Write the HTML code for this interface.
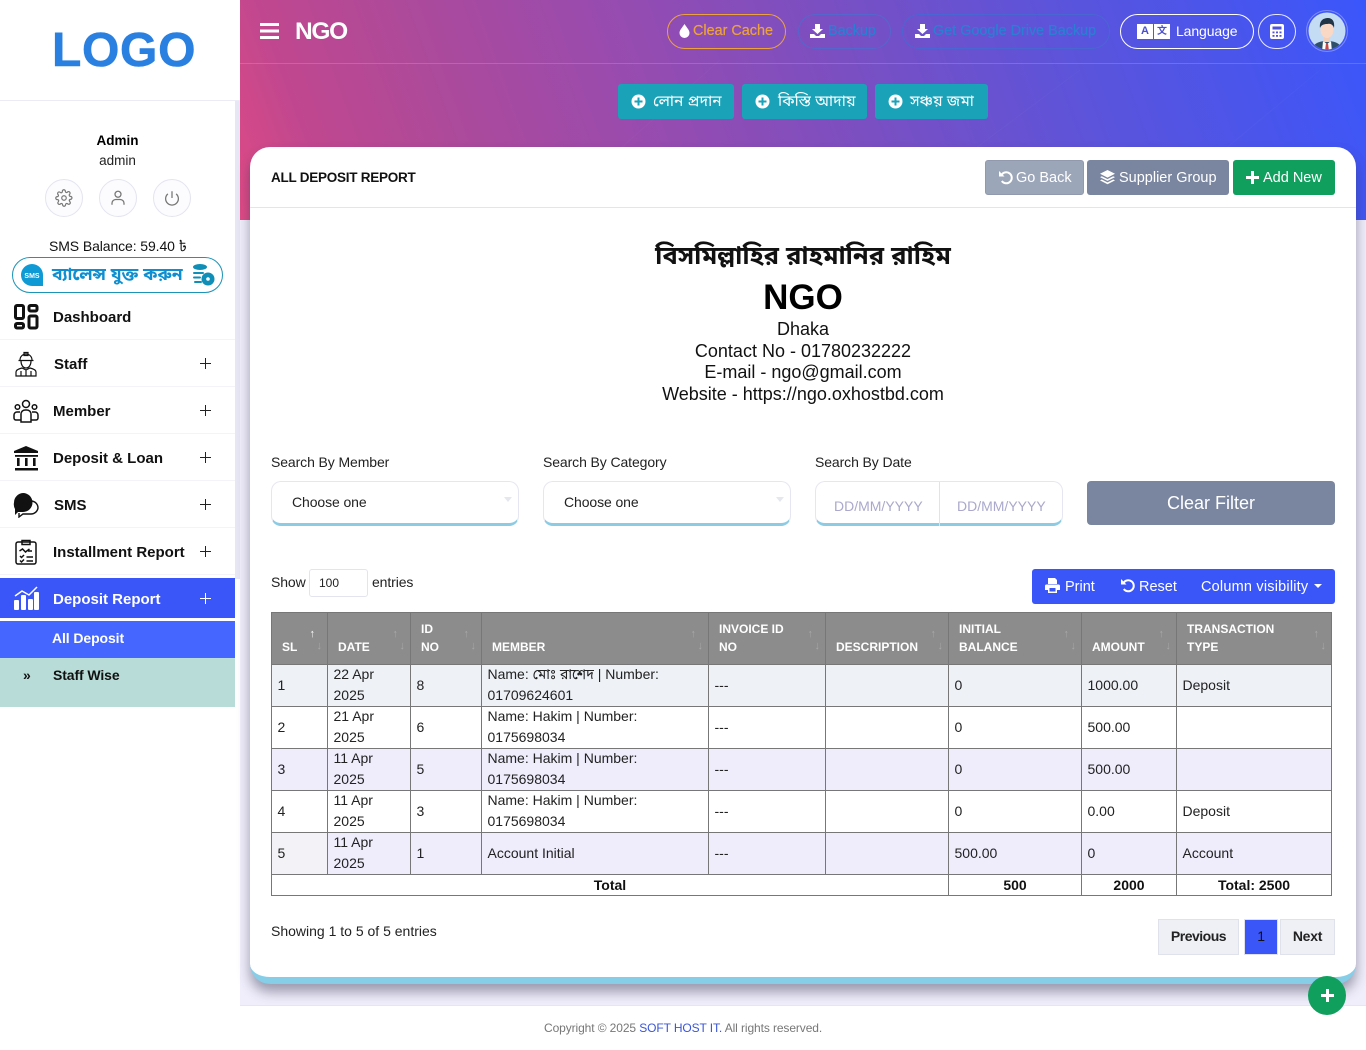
<!DOCTYPE html>
<html lang="en"><head><meta charset="utf-8"><title>All Deposit Report</title>
<style>
*{box-sizing:border-box}
html,body{margin:0;padding:0}
body{width:1366px;height:1050px;position:relative;overflow:hidden;background:#f0eefb;font-family:"Liberation Sans","Noto Sans Bengali","Noto Sans CJK SC",sans-serif;color:#111;font-size:14px}
.a{position:absolute;white-space:nowrap}
.side{position:absolute;left:0;top:0;width:240px;height:1050px;background:#fff}
.menu{position:absolute;left:0;width:235px;height:47px;border-bottom:1px solid #f3f3f8}
.menu b{position:absolute;left:53px;top:16px;font-size:15px;line-height:18px;color:#111}
.menu i{position:absolute;left:200px;top:18px;width:11px;height:11px;background:linear-gradient(#222,#222) center/11px 1.4px no-repeat,linear-gradient(#222,#222) center/1.4px 11px no-repeat}
.menu svg{position:absolute;left:13px;top:11px}
.hero{position:absolute;left:240px;top:0;width:1126px;height:220px;background:linear-gradient(70deg,#df4a85 0%,#c0478f 8%,#ad4a9a 20%,#9a4bad 35%,#7a4fc2 55%,#5a54dc 75%,#3a56fb 100%)}
.pill{position:absolute;top:14px;height:35px;border-radius:18px;border:1px solid;font-size:14.4px;line-height:33px;white-space:nowrap}
.pill span.t{position:absolute;top:0}
.pill svg.ic{position:absolute;top:9px}
.teal{position:absolute;top:84px;height:35px;background:#19a2b8;border-radius:3px;color:#fff;font-size:15.5px;line-height:35px;white-space:nowrap}
.teal svg{position:absolute;left:13px;top:10px}
.teal span{position:absolute;top:0}
.card{position:absolute;left:250px;top:147px;width:1106px;height:837px;background:#fff;border-radius:20px;border-bottom:7px solid #86cde8;box-shadow:0 8px 12px rgba(50,50,80,.45)}
.btn{position:absolute;top:160px;height:35px;border-radius:3px;color:#fff;font-size:14.5px;line-height:36px;white-space:nowrap}
.inp{position:absolute;top:481px;height:45px;background:#fff;border:1px solid #e6e6f2;border-bottom:3px solid #8ccbe3;border-radius:10px}
.lbl{position:absolute;top:454px;font-size:14px;line-height:17px;white-space:nowrap;color:#222;letter-spacing:-.1px}
table{position:absolute;left:271px;top:612px;width:1060px;border-collapse:collapse;table-layout:fixed;font-size:14px}
td,th{border:1px solid #777;padding:0 5.5px;line-height:21px;height:42px;vertical-align:middle;color:#222;overflow:hidden}
td>div{position:relative;top:-1px;margin-bottom:-1px}
th{background:#8c8c8c;color:#fff;font-size:12px;height:52px;vertical-align:bottom;text-align:left;padding:0 10px 8px 10px;line-height:18px;position:relative}
th::after{content:"↑";position:absolute;right:12px;top:15px;font-size:11px;line-height:12px;color:#a8a8a8;font-weight:400}
th::before{content:"↓";position:absolute;right:5px;top:27px;font-size:11px;line-height:12px;color:#a8a8a8;font-weight:400}
th.sl::after{color:#fff}
.r1 td{background:#eef1f6}.r3 td{background:#efedfc}.r5 td{background:#efedfc}
.r5 td:first-child{background:#f3f3f7}
.tot td{height:21px;font-weight:700;text-align:center;line-height:18px;padding-bottom:1px;background:#fff;color:#111}
.pg{position:absolute;top:919px;height:36px;background:#eef0f5;border:1px solid #dfe2ea;font-size:14px;font-weight:700;line-height:33px;text-align:center;color:#222;letter-spacing:-.25px}
</style></head><body>

<div class="hero">
 <svg style="position:absolute;left:0;top:0" width="1126" height="220"><g stroke="#fff" fill="none"><path d="M0 63.5H1126" stroke-opacity=".16"/><path d="M300 220L480 60M640 220L840 70M900 220L1080 70" stroke-opacity=".025"/></g></svg>
</div>

<div class="side">
 <div class="a" style="left:52px;top:20px;font-size:48px;line-height:62px;font-weight:700;color:#2a80e0;letter-spacing:.7px;-webkit-text-stroke:.6px #2a80e0">LOGO</div>
 <div style="position:absolute;left:0;top:100px;width:240px;height:1px;background:#ecebf5"></div>
 <div style="position:absolute;left:235px;top:101px;width:5px;height:478px;background:#e6e6f4"></div>
 <div class="a" style="left:0;width:235px;top:132px;text-align:center;font-size:13.5px;line-height:17px;font-weight:700;color:#000">Admin</div>
 <div class="a" style="left:0;width:235px;top:152px;text-align:center;font-size:13.5px;line-height:17px;color:#222">admin</div>
 <div style="position:absolute;left:45px;top:179px;width:38px;height:38px;border:1px solid #e4e4f0;border-radius:50%;background:#fcfcfe"></div>
 <div style="position:absolute;left:99px;top:179px;width:38px;height:38px;border:1px solid #e4e4f0;border-radius:50%;background:#fcfcfe"></div>
 <div style="position:absolute;left:153px;top:179px;width:38px;height:38px;border:1px solid #e4e4f0;border-radius:50%;background:#fcfcfe"></div>
 <svg style="position:absolute;left:55px;top:189px" width="18" height="18" viewBox="0 0 24 24" fill="none" stroke="#777" stroke-width="1.6"><circle cx="12" cy="12" r="3"/><path d="M19.4 15a1.6 1.6 0 0 0 .3 1.8l.1.1a2 2 0 1 1-2.9 2.9l-.1-.1a1.6 1.6 0 0 0-2.7 1.1V21a2 2 0 1 1-4 0v-.1a1.6 1.6 0 0 0-2.7-1.1l-.1.1a2 2 0 1 1-2.9-2.9l.1-.1a1.6 1.6 0 0 0-1.1-2.7H3a2 2 0 1 1 0-4h.1a1.6 1.6 0 0 0 1.1-2.7l-.1-.1a2 2 0 1 1 2.9-2.9l.1.1a1.6 1.6 0 0 0 2.7-1.1V3a2 2 0 1 1 4 0v.1a1.6 1.6 0 0 0 2.7 1.1l.1-.1a2 2 0 1 1 2.9 2.9l-.1.1a1.6 1.6 0 0 0 1.1 2.7h.1a2 2 0 1 1 0 4h-.1a1.6 1.6 0 0 0-1.5 1z"/></svg>
 <svg style="position:absolute;left:109px;top:189px" width="18" height="18" viewBox="0 0 24 24" fill="none" stroke="#777" stroke-width="1.7"><circle cx="12" cy="7" r="4"/><path d="M4 21v-2a5 5 0 0 1 5-5h6a5 5 0 0 1 5 5v2"/></svg>
 <svg style="position:absolute;left:163px;top:189px" width="18" height="18" viewBox="0 0 24 24" fill="none" stroke="#777" stroke-width="1.7"><path d="M12 3v9M17.5 6.5a8.5 8.5 0 1 1-11 0"/></svg>
 <div class="a" style="left:49px;top:238px;font-size:14px;line-height:17px;color:#111;letter-spacing:-.1px">SMS Balance: 59.40 ৳</div>

 <div style="position:absolute;left:12px;top:257px;width:211px;height:36px;border:1px solid #1a94b8;border-radius:18px;background:#fff"></div>
 <svg style="position:absolute;left:21px;top:264px" width="22" height="22" viewBox="0 0 22 22"><path d="M11 0a11 11 0 1 0 0 22h11V11A11 11 0 0 0 11 0z" fill="#0f9ad6"/><text x="11" y="14" font-size="7" font-weight="700" fill="#fff" text-anchor="middle" font-family="Liberation Sans">SMS</text></svg>
 <div class="a" style="left:52px;top:262px;font-size:17.5px;line-height:24px;font-weight:700;color:#0f8fd0">ব্যালেন্স যুক্ত করুন</div>
 <svg style="position:absolute;left:192px;top:264px" width="23" height="22" viewBox="0 0 23 22" fill="#0f8fb8"><ellipse cx="8" cy="3" rx="7" ry="3"/><rect x="1" y="8" width="11" height="2" rx="1"/><rect x="1" y="12.5" width="8" height="2" rx="1"/><rect x="2" y="17" width="8" height="2" rx="1"/><circle cx="16" cy="15" r="6.5"/><circle cx="16" cy="15" r="1.800" fill="#fff"/></svg>

 <div class="menu" style="top:293px"><svg width="26" height="26" viewBox="0 0 26 26" fill="none" stroke="#111" stroke-width="3"><rect x="2.500" y="1.500" width="8" height="13" rx="1.500"/><rect x="16" y="1.500" width="8" height="5.500" rx="1.500"/><rect x="2.500" y="19.500" width="8" height="4.500" rx="1.500"/><rect x="16" y="12" width="8" height="12" rx="1.500"/></svg><b>Dashboard</b></div>
 <div class="menu" style="top:340px"><svg width="26" height="26" viewBox="0 0 26 26" fill="none" stroke="#111" stroke-width="1.200"><path d="M7 9a6 6 0 0 1 12 0M5.500 9.500h15M8 10c0 4 2 7 5 7s5-3 5-7M3 25v-4c0-2 2-3 6-4l4 2 4-2c4 1 6 2 6 4v4zM8 20v5M18 20v5M13 19v6M11 1.500h4v3h-4z"/></svg><b style="left:54px">Staff</b><i></i></div>
 <div class="menu" style="top:387px"><svg width="26" height="26" viewBox="0 0 26 26" fill="none" stroke="#111" stroke-width="1.500"><circle cx="13" cy="6" r="3.500"/><circle cx="4.500" cy="9" r="2.300"/><circle cx="21.500" cy="9" r="2.300"/><path d="M8 24v-8a4 4 0 0 1 4-4h2a4 4 0 0 1 4 4v8zM8 22H3a2 2 0 0 1-2-2v-3a3 3 0 0 1 3-3h3M18 22h5a2 2 0 0 0 2-2v-3a3 3 0 0 0-3-3h-3"/></svg><b>Member</b><i></i></div>
 <div class="menu" style="top:434px"><svg width="26" height="26" viewBox="0 0 26 26" fill="#111"><path d="M13 1L25 6v2H1V6z"/><rect x="2" y="10" width="23" height="1.800"/><rect x="4" y="13" width="2.600" height="8"/><rect x="12" y="13" width="2.600" height="8"/><rect x="20" y="13" width="2.600" height="8"/><rect x="2" y="23" width="23" height="2.500"/></svg><b>Deposit &amp; Loan</b><i></i></div>
 <div class="menu" style="top:481px"><svg width="26" height="26" viewBox="0 0 26 26"><path d="M18 9a7 7 0 0 1 7 7 7 7 0 0 1-7 6H10l-4 3v-4" fill="none" stroke="#111" stroke-width="1.400"/><path d="M10 1a9.500 9.500 0 0 1 9.500 9.500A9.500 9.500 0 0 1 10 20H5l-3 3v-6a9.500 9.500 0 0 1-1-6.500A9.500 9.500 0 0 1 10 1z" fill="#111"/></svg><b style="left:54px">SMS</b><i></i></div>
 <div class="menu" style="top:528px"><svg width="26" height="26" viewBox="0 0 26 26" fill="none" stroke="#111" stroke-width="1.500"><rect x="3" y="3" width="20" height="22" rx="2"/><path d="M9 1.500h8v4H9zM6.500 12l3-2 3 3 4-3M7 17l1.500 1.500L11 16M7 21.500l1.500 1.500L11 20.500M13.500 18H20M13.500 22H20M15 12h4"/></svg><b>Installment Report</b><i></i></div>
 <div style="position:absolute;left:0;top:578px;width:235px;height:40px;background:#3a55f8">
  <svg style="position:absolute;left:13px;top:7px" width="27" height="26" viewBox="0 0 27 26" fill="#fff"><rect x="1" y="15" width="5" height="10" rx="1"/><rect x="8" y="10" width="5" height="15" rx="1"/><rect x="15" y="14" width="5" height="11" rx="1"/><rect x="21" y="7" width="5" height="18" rx="1"/><path d="M2 11l7-5 7 4 8-8" fill="none" stroke="#fff" stroke-width="1.500"/></svg>
  <div class="a" style="left:53px;top:12.500px;font-size:15px;line-height:18px;font-weight:700;color:#fff">Deposit Report</div>
  <div style="position:absolute;left:200px;top:15px;width:11px;height:11px;background:linear-gradient(#fff,#fff) center/11px 1.400px no-repeat,linear-gradient(#fff,#fff) center/1.400px 11px no-repeat"></div>
 </div>
 <div style="position:absolute;left:0;top:621px;width:235px;height:37px;background:#4566ff"><div class="a" style="left:52px;top:9px;font-size:14px;line-height:17px;font-weight:700;color:#fff;letter-spacing:-.1px">All Deposit</div></div>
 <div style="position:absolute;left:0;top:658px;width:235px;height:49px;background:#b8dcd7"><div class="a" style="left:23px;top:9px;font-size:14px;line-height:17px;font-weight:700;color:#111">»</div><div class="a" style="left:53px;top:9px;font-size:14px;line-height:17px;font-weight:700;color:#111;letter-spacing:-.1px">Staff Wise</div></div>
</div>

<svg style="position:absolute;left:260px;top:23px" width="20" height="16"><g fill="#fff"><rect width="19" height="3"/><rect y="6.500" width="19" height="3"/><rect y="13" width="19" height="3"/></g></svg>
<div class="a" style="left:295px;top:18px;font-size:24.500px;line-height:28px;font-weight:700;color:#fff;letter-spacing:-1.300px">NGO</div>

<div class="pill" style="left:667px;width:119px;border-color:#eda23c;color:#eda23c;-webkit-text-stroke:.2px #eda23c"><svg class="ic" style="left:11px" width="11" height="14" viewBox="0 0 11 14"><path d="M5.500 0C3 4 .5 6 .5 9a5 5 0 0 0 10 0C10.500 6 8 4 5.500 0z" fill="#fff"/></svg><span class="t" style="left:25px">Clear Cache</span></div>
<div class="pill" style="left:798px;width:93px;border-color:#5566cc;color:#2c7ed4;-webkit-text-stroke:.25px #2c7ed4"><svg class="ic" style="left:11px" width="15" height="14" viewBox="0 0 15 14" fill="#fff"><path d="M5 0h5v5h3L7.500 10 2 5h3zM0 10h4l2 2h3l2-2h4v4H0z"/></svg><span class="t" style="left:29px">Backup</span></div>
<div class="pill" style="left:902px;width:208px;border-color:#4a66d2;color:#2c7ed4;-webkit-text-stroke:.25px #2c7ed4"><svg class="ic" style="left:12px" width="15" height="14" viewBox="0 0 15 14" fill="#fff"><path d="M5 0h5v5h3L7.500 10 2 5h3zM0 10h4l2 2h3l2-2h4v4H0z"/></svg><span class="t" style="left:30px">Get Google Drive Backup</span></div>
<div class="pill" style="left:1120px;width:134px;border-color:#fff;color:#fff;font-size:14px"><span style="position:absolute;left:16px;top:9px;width:16px;height:15px;background:#fff;color:#4a4fd0;font-size:11px;line-height:15px;font-weight:700;text-align:center">A</span><span style="position:absolute;left:33px;top:9px;width:16px;height:15px;background:#fff;color:#4a4fd0;font-size:10px;line-height:15px;font-weight:700;text-align:center">文</span><span style="position:absolute;left:55px;top:0;letter-spacing:-.1px">Language</span></div>
<div class="pill" style="left:1258px;width:38px;border-color:#e8e8ff"></div>
<svg style="position:absolute;left:1270px;top:24px" width="14" height="15" viewBox="0 0 14 15"><rect width="14" height="15" rx="2" fill="#fff"/><rect x="2.500" y="2.500" width="9" height="3" fill="#4f53d8"/><g fill="#4f53d8"><rect x="2.500" y="7.500" width="2" height="1.800"/><rect x="6" y="7.500" width="2" height="1.800"/><rect x="9.500" y="7.500" width="2" height="1.800"/><rect x="2.500" y="11" width="2" height="1.800"/><rect x="6" y="11" width="2" height="1.800"/><rect x="9.500" y="11" width="2" height="1.800"/></g></svg>
<svg style="position:absolute;left:1306px;top:10px" width="42" height="42" viewBox="0 0 42 42"><circle cx="21" cy="21" r="20.500" fill="none" stroke="#7f8cf5"/><defs><clipPath id="c"><circle cx="21" cy="21" r="18.500"/></clipPath></defs><g clip-path="url(#c)"><rect width="42" height="42" fill="#c4dcf4"/><path d="M6 42c0-8 6-11 15-11s15 3 15 11z" fill="#2f5068"/><path d="M17 31l4 3 4-3 1 11H16z" fill="#fff"/><path d="M20 33h2l1 8h-4z" fill="#c44a4a"/><rect x="18" y="25" width="6" height="7" fill="#f2cdb8"/><ellipse cx="21" cy="20" rx="6.500" ry="8" fill="#fad8c6"/><path d="M14 18c-1-8 4-10 8-10s7 3 6 10c-1-3-3-5-7-4-3 0-6 1-7 4z" fill="#1f3446"/></g></svg>

<div class="teal" style="left:618px;width:116px"><svg width="15" height="15" viewBox="0 0 15 15"><circle cx="7.500" cy="7.500" r="7" fill="#fff"/><path d="M7.500 3.500v8M3.500 7.500h8" stroke="#19a2b8" stroke-width="2"/></svg><span style="left:35px">লোন প্রদান</span></div>
<div class="teal" style="left:742px;width:125px"><svg width="15" height="15" viewBox="0 0 15 15"><circle cx="7.500" cy="7.500" r="7" fill="#fff"/><path d="M7.500 3.500v8M3.500 7.500h8" stroke="#19a2b8" stroke-width="2"/></svg><span style="left:36px">কিস্তি আদায়</span></div>
<div class="teal" style="left:875px;width:113px"><svg width="15" height="15" viewBox="0 0 15 15"><circle cx="7.500" cy="7.500" r="7" fill="#fff"/><path d="M7.500 3.500v8M3.500 7.500h8" stroke="#19a2b8" stroke-width="2"/></svg><span style="left:35px">সঞ্চয় জমা</span></div>

<div style="position:absolute;left:240px;top:1005px;width:1126px;height:45px;background:#fff;border-top:1px solid #e6e6ef"></div>
<div class="a" style="left:544px;top:1021px;font-size:12px;line-height:15px;color:#777;letter-spacing:-.1px">Copyright © 2025 <span style="color:#3a55d8">SOFT HOST IT.</span> All rights reserved.</div>

<div class="card"></div>
<div style="position:absolute;left:250px;top:207px;width:1106px;height:1px;background:#e4e4f0"></div>
<div class="a" style="left:271px;top:169px;font-size:13.500px;line-height:17px;font-weight:700;color:#111;letter-spacing:-.25px">ALL DEPOSIT REPORT</div>

<div class="btn" style="left:985px;width:99px;background:#9ca6b9;border:1px solid #9099ae;line-height:34px"><svg style="position:absolute;left:12px;top:9px" width="15" height="15" viewBox="0 0 15 15"><path d="M3.500 5a5.500 5.500 0 1 1 .3 6" fill="none" stroke="#fff" stroke-width="2"/><path d="M1 1l5.500 5.500H1z" fill="#fff"/></svg><span style="position:absolute;left:30px">Go Back</span></div>
<div class="btn" style="left:1087px;width:142px;background:#7a869f"><svg style="position:absolute;left:13px;top:10px" width="15" height="15" viewBox="0 0 15 15" fill="#fff"><path d="M7.500 0L15 3.800 7.500 7.600 0 3.800zM1.800 6.200l5.700 2.900 5.700-2.900 1.800.9-7.500 3.800L0 7.100zM1.800 9.500l5.700 2.900 5.700-2.900 1.800.9L7.500 14.200 0 10.400z"/></svg><span style="position:absolute;left:32px">Supplier Group</span></div>
<div class="btn" style="left:1233px;width:102px;background:#109f5d"><svg style="position:absolute;left:13px;top:11px" width="13" height="13"><path d="M6.500 0v13M0 6.500h13" stroke="#fff" stroke-width="3"/></svg><span style="position:absolute;left:30px">Add New</span></div>

<div class="a" style="left:250px;width:1106px;top:239px;text-align:center;font-size:25.500px;line-height:34px;font-weight:700;color:#111">বিসমিল্লাহির রাহমানির রাহিম</div>
<div class="a" style="left:250px;width:1106px;top:277px;text-align:center;font-size:35px;line-height:42px;font-weight:700;color:#000">NGO</div>
<div class="a" style="left:250px;width:1106px;top:318px;text-align:center;font-size:18px;line-height:22px;color:#111">Dhaka</div>
<div class="a" style="left:250px;width:1106px;top:340px;text-align:center;font-size:18px;line-height:22px;color:#111">Contact No - 01780232222</div>
<div class="a" style="left:250px;width:1106px;top:361px;text-align:center;font-size:18px;line-height:22px;color:#111">E-mail - ngo@gmail.com</div>
<div class="a" style="left:250px;width:1106px;top:383px;text-align:center;font-size:18px;line-height:22px;color:#111">Website - https://ngo.oxhostbd.com</div>

<div class="lbl" style="left:271px">Search By Member</div>
<div class="lbl" style="left:543px">Search By Category</div>
<div class="lbl" style="left:815px">Search By Date</div>
<div class="inp" style="left:271px;width:248px"></div>
<div class="inp" style="left:543px;width:248px"></div>
<div class="inp" style="left:815px;width:248px"></div>
<div style="position:absolute;left:939px;top:482px;width:1px;height:44px;background:#e2e2ee"></div>
<div class="a" style="left:292px;top:494px;font-size:14px;line-height:17px;color:#222;letter-spacing:-.1px">Choose one</div>
<div class="a" style="left:564px;top:494px;font-size:14px;line-height:17px;color:#222;letter-spacing:-.1px">Choose one</div>
<div style="position:absolute;left:504px;top:497px;border:4px solid transparent;border-top:5px solid #e6e6ee"></div>
<div style="position:absolute;left:776px;top:497px;border:4px solid transparent;border-top:5px solid #e6e6ee"></div>
<div class="a" style="left:834px;top:498px;font-size:14px;line-height:17px;color:#aaa9cc">DD/MM/YYYY</div>
<div class="a" style="left:957px;top:498px;font-size:14px;line-height:17px;color:#aaa9cc">DD/MM/YYYY</div>
<div style="position:absolute;left:1087px;top:481px;width:248px;height:44px;background:#7a869f;border-radius:4px;color:#fff;font-size:18px;line-height:44px;text-align:center">Clear Filter</div>

<div class="a" style="left:271px;top:574px;font-size:14px;line-height:17px;color:#222;letter-spacing:-.1px">Show</div>
<div style="position:absolute;left:309px;top:569px;width:59px;height:28px;border:1px solid #e4e4ee;border-radius:3px;background:#fff;font-size:12px;line-height:26px;padding-left:9px;color:#222">100</div>
<div class="a" style="left:372px;top:574px;font-size:14px;line-height:17px;color:#222;letter-spacing:-.1px">entries</div>

<div style="position:absolute;left:1032px;top:569px;width:303px;height:35px;background:#3a55f8;border-radius:3px;color:#fff;font-size:14.500px;line-height:36px">
 <svg style="position:absolute;left:13px;top:9px" width="15" height="15" viewBox="0 0 15 15" fill="#fff"><path d="M3 0h7l2 2v4H3zM1.500 6.500h12a1.500 1.500 0 0 1 1.500 1.500v4h-3v3H3v-3H0V8a1.500 1.500 0 0 1 1.500-1.500z"/><rect x="4.500" y="10" width="6" height="3.500" fill="#3a55f8"/></svg>
 <span class="a" style="left:33px">Print</span>
 <svg style="position:absolute;left:88px;top:9px" width="15" height="15" viewBox="0 0 15 15"><path d="M3.500 5a5.500 5.500 0 1 1 .3 6" fill="none" stroke="#fff" stroke-width="2"/><path d="M1 1l5.500 5.500H1z" fill="#fff"/></svg>
 <span class="a" style="left:107px">Reset</span>
 <span class="a" style="left:169px;letter-spacing:.2px">Column visibility</span>
 <span style="position:absolute;left:282px;top:15px;border:4px solid transparent;border-top:4px solid #fff"></span>
</div>

<table>
<colgroup><col style="width:56px"><col style="width:83px"><col style="width:71px"><col style="width:227px"><col style="width:117px"><col style="width:123px"><col style="width:133px"><col style="width:95px"><col style="width:155px"></colgroup>
<thead><tr><th class="sl">SL</th><th>DATE</th><th>ID<br>NO</th><th>MEMBER</th><th>INVOICE ID<br>NO</th><th>DESCRIPTION</th><th>INITIAL<br>BALANCE</th><th>AMOUNT</th><th>TRANSACTION<br>TYPE</th></tr></thead>
<tbody>
<tr class="r1"><td><div>1</div></td><td><div>22 Apr<br>2025</div></td><td><div>8</div></td><td><div>Name: মোঃ রাশেদ | Number:<br>01709624601</div></td><td><div>---</div></td><td></td><td><div>0</div></td><td><div>1000.00</div></td><td><div>Deposit</div></td></tr>
<tr><td><div>2</div></td><td><div>21 Apr<br>2025</div></td><td><div>6</div></td><td><div>Name: Hakim | Number:<br>0175698034</div></td><td><div>---</div></td><td></td><td><div>0</div></td><td><div>500.00</div></td><td></td></tr>
<tr class="r3"><td><div>3</div></td><td><div>11 Apr<br>2025</div></td><td><div>5</div></td><td><div>Name: Hakim | Number:<br>0175698034</div></td><td><div>---</div></td><td></td><td><div>0</div></td><td><div>500.00</div></td><td></td></tr>
<tr><td><div>4</div></td><td><div>11 Apr<br>2025</div></td><td><div>3</div></td><td><div>Name: Hakim | Number:<br>0175698034</div></td><td><div>---</div></td><td></td><td><div>0</div></td><td><div>0.00</div></td><td><div>Deposit</div></td></tr>
<tr class="r5"><td><div>5</div></td><td><div>11 Apr<br>2025</div></td><td><div>1</div></td><td><div>Account Initial</div></td><td><div>---</div></td><td></td><td><div>500.00</div></td><td><div>0</div></td><td><div>Account</div></td></tr>
<tr class="tot"><td colspan="6">Total</td><td>500</td><td>2000</td><td>Total: 2500</td></tr>
</tbody></table>

<div class="a" style="left:271px;top:923px;font-size:14px;line-height:17px;color:#222">Showing 1 to 5 of 5 entries</div>
<div class="pg" style="left:1158px;width:81px;letter-spacing:-.5px">Previous</div>
<div class="pg" style="left:1244px;width:34px;background:#3a55f8;border-color:#dfe2ea;color:#111;font-weight:400">1</div>
<div class="pg" style="left:1280px;width:55px">Next</div>

<div style="position:absolute;left:1308px;top:976px;width:38px;height:39px;border-radius:50%;background:#109f5d"></div>
<svg style="position:absolute;left:1321px;top:989px" width="13" height="13"><path d="M6.500 0v13M0 6.500h13" stroke="#fff" stroke-width="3"/></svg>

</body></html>
